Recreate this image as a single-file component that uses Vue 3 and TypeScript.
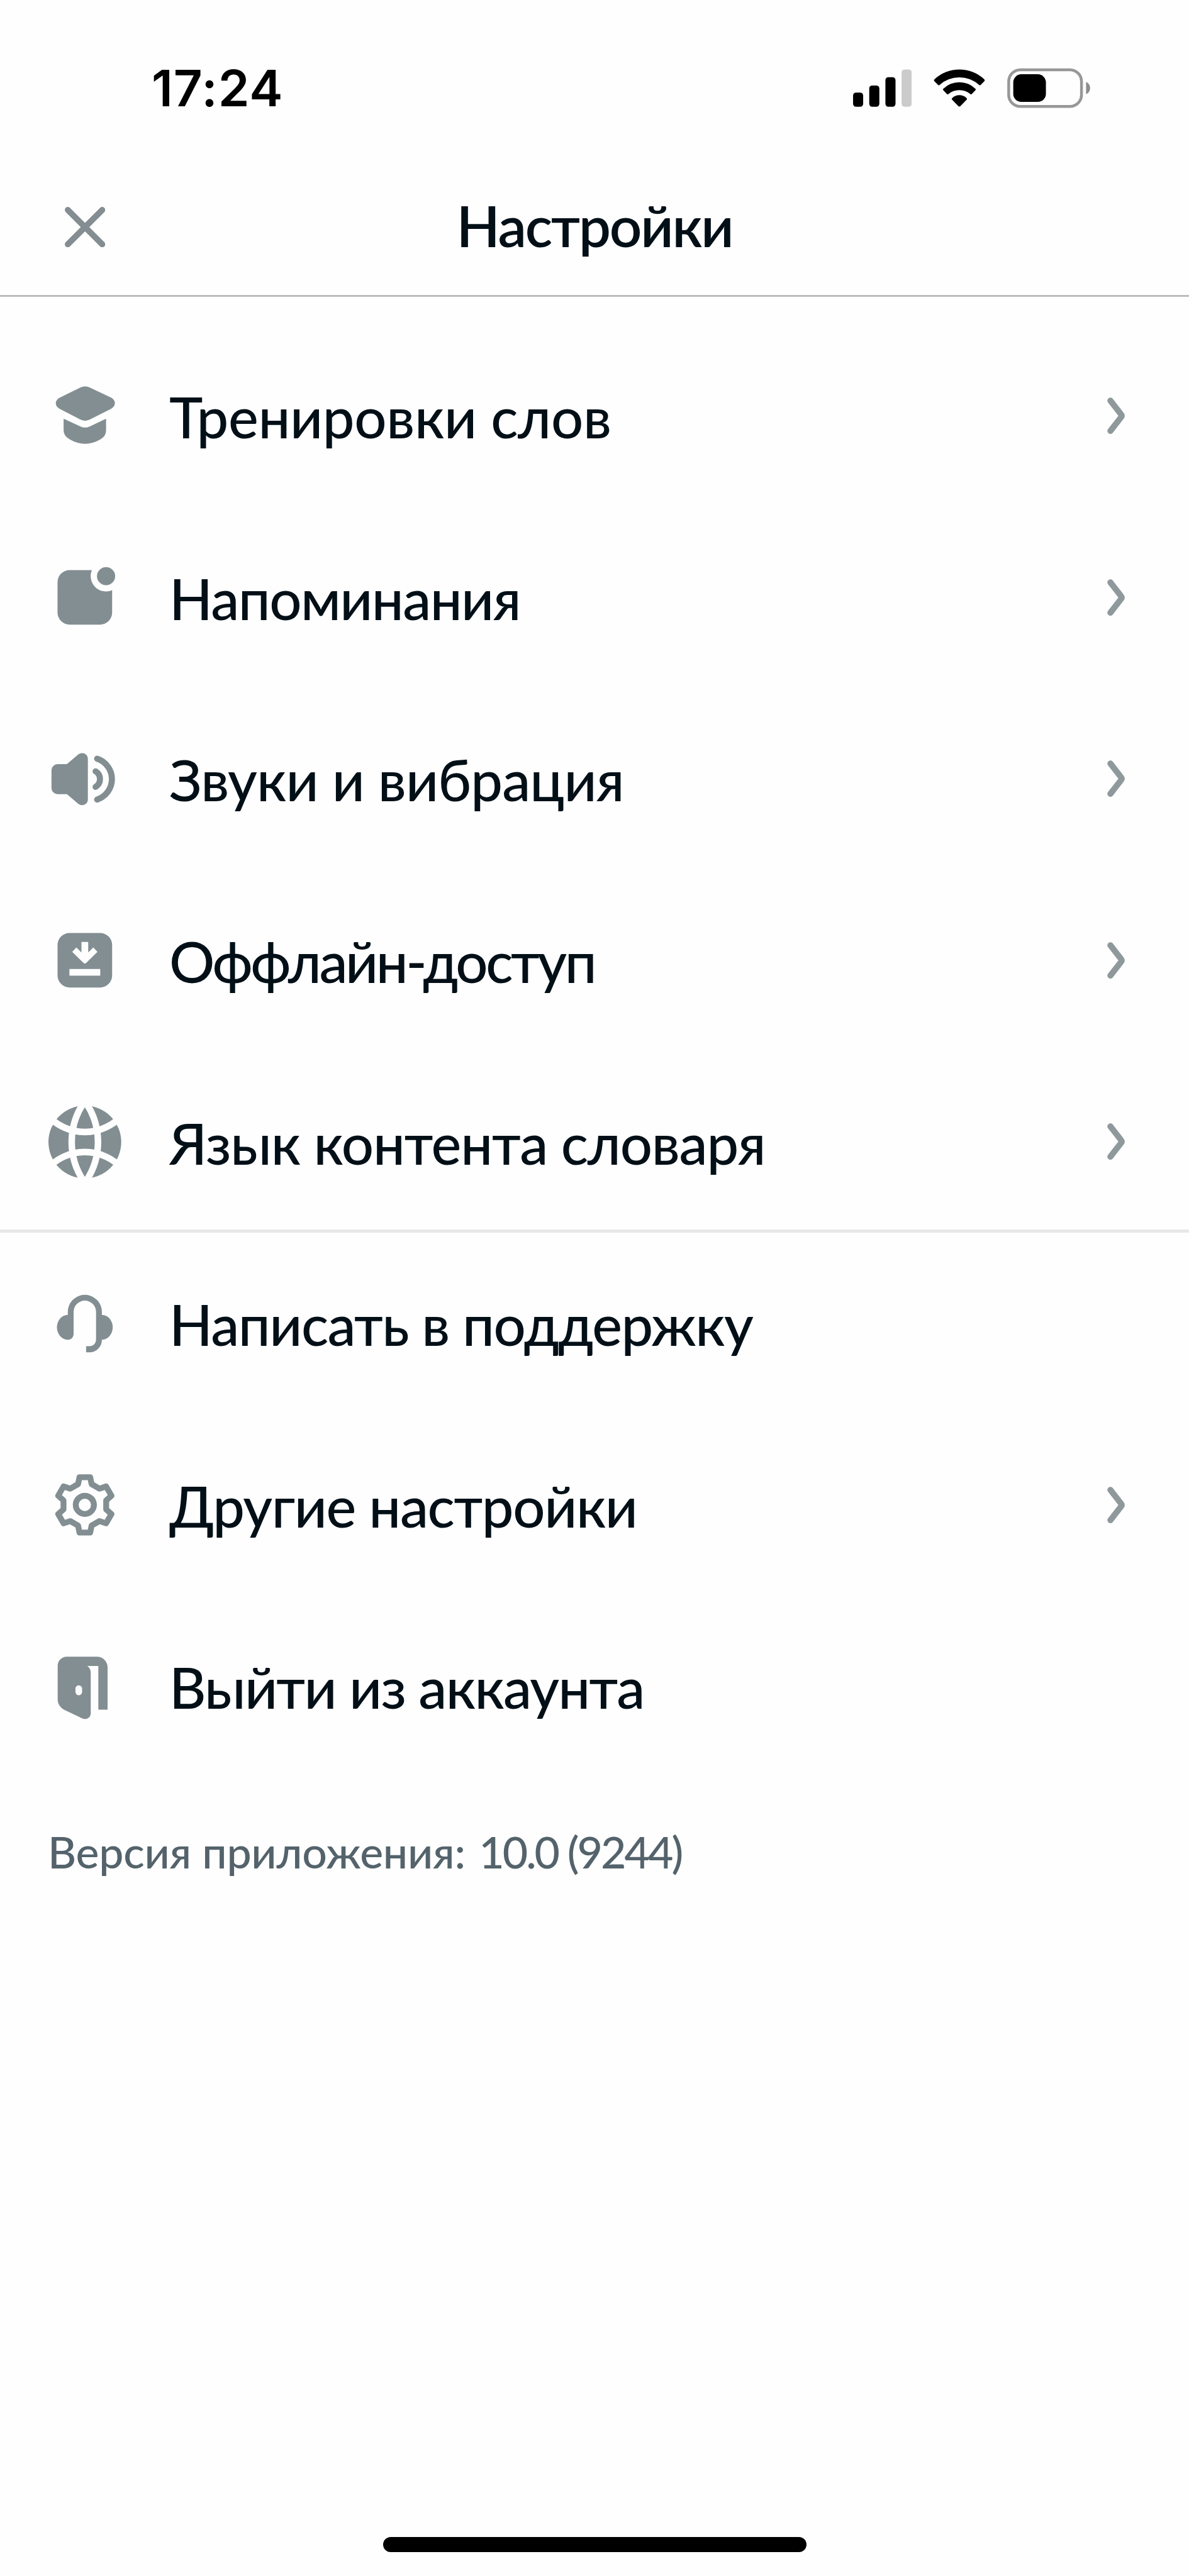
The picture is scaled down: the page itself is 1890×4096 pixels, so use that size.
<script setup lang="ts">
type IconName = 'cap' | 'badge' | 'sound' | 'download' | 'globe' | 'headset' | 'gear' | 'door'

interface SettingsItem {
  icon: IconName
  label: string
  tracking: number
  chevron: boolean
}

const groups: SettingsItem[][] = [
  [
    { icon: 'cap', label: 'Тренировки слов', tracking: -0.33, chevron: true },
    { icon: 'badge', label: 'Напоминания', tracking: -1.6, chevron: true },
    { icon: 'sound', label: 'Звуки и вибрация', tracking: -0.88, chevron: true },
    { icon: 'download', label: 'Оффлайн-доступ', tracking: -3.45, chevron: true },
    { icon: 'globe', label: 'Язык контента словаря', tracking: -1.2, chevron: true },
  ],
  [
    { icon: 'headset', label: 'Написать в поддержку', tracking: -1.55, chevron: false },
    { icon: 'gear', label: 'Другие настройки', tracking: -1.4, chevron: true },
    { icon: 'door', label: 'Выйти из аккаунта', tracking: -1.7, chevron: false },
  ],
]

// One tooth of the gear, repeated every 60 degrees
const tooth: [number, number][] = [
  [-13.4, -41],
  [-10.6, -54.7],
  [10.6, -54.7],
  [13.4, -41],
]
const gearPoints = [0, 1, 2, 3, 4, 5]
  .flatMap((step) => {
    const a = (step * Math.PI) / 3
    return tooth.map(([x, y]) => {
      const px = x * Math.cos(a) - y * Math.sin(a)
      const py = x * Math.sin(a) + y * Math.cos(a)
      return `${px.toFixed(2)},${py.toFixed(2)}`
    })
  })
  .join(' ')
</script>

<template>
  <main class="screen">
    <div class="status">
      <span class="time">17:24</span>
      <div class="indicators">
        <svg class="signal" viewBox="0 0 116 80">
          <rect x="0" y="48.7" width="20" height="28.3" rx="6" />
          <rect x="32" y="34.7" width="20" height="42.3" rx="6" />
          <rect x="64" y="18.3" width="20" height="58.7" rx="6" />
          <rect x="96" y="3" width="20" height="74" rx="6" fill="#cbcbcb" />
        </svg>
        <svg class="wifi" viewBox="0 0 102 80">
          <path d="M1.6 22.6A72 72 0 0 1 100.4 22.6Q102 24.3 100.6 26L93.2 33.6Q91.7 35 90 33.6A58.5 58.5 0 0 0 12 33.6Q10.3 35 8.8 33.6L1.4 26Q0 24.3 1.6 22.6Z" />
          <path d="M19.4 41A45.5 45.5 0 0 1 82.6 41Q84.2 42.6 82.8 44.2L75.6 51.6Q74.2 53 72.6 51.6A33.6 33.6 0 0 0 29.4 51.6Q27.8 53 26.4 51.6L19.2 44.2Q17.8 42.6 19.4 41Z" />
          <path d="M36.8 59.6A20.5 20.5 0 0 1 65.2 59.6Q66.8 61.3 65.4 63L53 75.6Q51 77.6 49 75.6L36.6 63Q35.2 61.3 36.8 59.6Z" />
        </svg>
        <svg class="battery" viewBox="0 0 165 80">
          <rect x="3" y="3.6" width="144" height="72.6" rx="23" fill="none" stroke="#979797" stroke-width="5.6" />
          <rect x="12" y="12.6" width="64.6" height="54.6" rx="16" />
          <path d="M156 27.6C161 29.6 164 34.4 164 39.8S161 50 156 52Z" fill="#8c8c8c" />
        </svg>
      </div>
    </div>

    <header class="header">
      <button class="close" aria-label="Закрыть">
        <svg viewBox="-40 -40 80 80">
          <path d="M-34 -34L34 34M34 -34L-34 34" />
        </svg>
      </button>
      <h1 class="title">Настройки</h1>
    </header>

    <nav class="list">
      <ul v-for="(group, g) in groups" :key="g" class="group">
        <li v-for="item in group" :key="item.icon" class="row">
          <svg class="icon" viewBox="-72 -72 144 144">
            <g v-if="item.icon === 'cap'">
              <path d="M-49.5 -35.5L-9 -55.4C-3 -58.6 4 -58.6 10 -55.4L52 -35.5C62 -30 62 -19 52 -13.5L10 7.8C4 10.8 -3 10.8 -9 7.8L-50 -13.5C-60 -19 -60 -30 -49.5 -35.5Z" />
              <path d="M-42 6L-9 21.3C-3 24.4 4 24.4 10 21.3L42 6V28C42 38 38 43 30 47.5C10 58.7 -9 58.7 -29 47.5C-37 43 -42 38 -42 28Z" />
            </g>
            <g v-else-if="item.icon === 'badge'">
              <path d="M14 -54H-30A24 24 0 0 0 -54 -30V30A24 24 0 0 0 -30 54H30A24 24 0 0 0 54 30V-14A30.5 30.5 0 0 1 14 -54Z" />
              <circle cx="42" cy="-42" r="18" />
            </g>
            <g v-else-if="item.icon === 'sound'">
              <path d="M-54 -29.6H-35.5L-14 -48C-6 -55 6 -51 6 -40V40C6 51 -6 55 -14 48L-35.5 29.6H-54A12 12 0 0 1 -66 17.6V-17.6A12 12 0 0 1 -54 -29.6Z" />
              <path class="wave" d="M24.3 -40.4A42.5 42.5 0 0 1 24.3 40.4" />
              <path class="wave" d="M21.3 -15.4A18 18 0 0 1 21.3 15.4" />
            </g>
            <g v-else-if="item.icon === 'download'">
              <rect x="-54" y="-54" width="108" height="108" rx="24" />
              <path class="cut" d="M-6.7 -36.3H6.7V-15.3L16.7 -25.3L25 -16.7L2.8 5.2Q0 7.8 -2.8 5.2L-25 -16.7L-16.7 -25.3L-6.7 -15.3Z" />
              <rect class="cut" x="-30.5" y="17.3" width="61" height="13.2" />
            </g>
            <g v-else-if="item.icon === 'globe'">
              <circle r="72" />
              <path
                class="grid-line"
                d="M-3.4 -76A139 139 0 0 0 -3.4 76M3.4 -76A139 139 0 0 1 3.4 76M-74 -53A99 99 0 0 0 74 -53M-74 53A99 99 0 0 1 74 53"
              />
            </g>
            <g v-else-if="item.icon === 'headset'">
              <path d="M-33.7 -16.4V-22.3A33.7 33.7 0 0 1 33.7 -22.3V-16.4A21.5 24.65 0 0 1 33.7 32.9C33.7 47 23 57.9 9 57.9H2.5V45.7H9C17 45.7 22.2 40 22.2 32V-22.3A22.2 22.2 0 0 0 -22.2 -22.3V21C-22.2 28 -27 32.9 -33.7 32.9A21.5 24.65 0 0 1 -33.7 -16.4Z" />
            </g>
            <g v-else-if="item.icon === 'gear'" class="outline">
              <polygon :points="gearPoints" />
              <circle r="18" />
            </g>
            <path
              v-else
              fill-rule="evenodd"
              d="M-36 -58H24A21 21 0 0 1 45 -37V47H26.7V-39.5H5C9 -36.5 11.7 -32 11.7 -26V54C11.7 62 4 67.5 -4 64.5L-40 47.5C-49 43 -53.7 35 -53.7 27V-40A18 18 0 0 1 -36 -58ZM-12 -1.5A6.6 6.6 0 0 0 -18.6 5.1V11.7A6.6 6.6 0 0 0 -5.4 11.7V5.1A6.6 6.6 0 0 0 -12 -1.5Z"
            />
          </svg>
          <span class="label" :style="{ letterSpacing: item.tracking + 'px' }">{{ item.label }}</span>
          <svg v-if="item.chevron" class="chevron" viewBox="0 -40 40 80">
            <path d="M6.3 -30L27.4 -2.8Q29.6 0 27.4 2.8L6.3 30" />
          </svg>
        </li>
      </ul>
    </nav>

    <p class="version">Версия приложения: <span class="build">10.0 (9244)</span></p>

    <div class="home-indicator"></div>
  </main>
</template>

<style>
body {
  margin: 0;
  background: #fefefe;
}
</style>

<style scoped>
.screen {
  --u: calc(1890px / 2352);
  box-sizing: border-box;
  display: flex;
  flex-direction: column;
  width: 1890px;
  height: 4096px;
  overflow: hidden;
  background: #fefefe;
  color: #020f17;
  font-family: Lato, "Noto Sans", sans-serif;
}

svg {
  display: block;
  flex: none;
}

.status {
  box-sizing: border-box;
  display: flex;
  align-items: center;
  justify-content: space-between;
  height: 244px;
  padding: 36px 156.5px 0 241px;
  color: #000;
}

.time {
  font-family: Inter, sans-serif;
  font-size: 80px;
  font-weight: 600;
  line-height: 100px;
  letter-spacing: 1px;
}

.indicators {
  display: flex;
  align-items: center;
}

.signal {
  width: calc(116 * var(--u));
  height: calc(80 * var(--u));
  margin-right: calc(43.5 * var(--u));
}

.wifi {
  width: calc(102 * var(--u));
  height: calc(80 * var(--u));
  margin-right: calc(43.5 * var(--u));
}

.battery {
  width: calc(165 * var(--u));
  height: calc(80 * var(--u));
}

.header {
  box-sizing: border-box;
  display: grid;
  grid-template-columns: 240px 1fr 240px;
  align-items: center;
  height: 227.5px;
  border-bottom: 3px solid #bcbcbc;
}

.close {
  justify-self: end;
  margin: 10px 73px 0 0;
  padding: 0;
  border: 0;
  background: none;
}

.close svg {
  width: calc(80 * var(--u));
  height: calc(80 * var(--u));
  fill: none;
  stroke: #838d92;
  stroke-width: 12;
  stroke-linecap: round;
}

.title {
  margin: 0;
  padding-top: 4px;
  font-size: 90.5px;
  font-weight: 600;
  line-height: 110px;
  letter-spacing: -2.2px;
  text-align: center;
}

.list {
  padding-top: 45.5px;
}

.group {
  margin: 0;
  padding: 0;
  list-style: none;
}

.group:first-child {
  box-shadow: inset 0 -5px 0 #e8e8e8;
}

.row {
  box-sizing: border-box;
  display: flex;
  align-items: center;
  height: 288.57px;
  padding: 0 98px 0 77px;
}

.icon {
  width: calc(144 * var(--u));
  height: calc(144 * var(--u));
  margin-right: 76.3px;
  overflow: visible;
  fill: #828e92;
}

.wave {
  fill: none;
  stroke: #828e92;
  stroke-width: 12;
  stroke-linecap: round;
}

.cut {
  fill: #fefefe;
}

.grid-line {
  fill: none;
  stroke: #fefefe;
  stroke-width: 13;
}

.outline {
  fill: none;
  stroke: #828e92;
  stroke-width: 11.6;
  stroke-linejoin: round;
}

.label {
  flex: 1;
  padding-top: 2px;
  font-size: 90.3px;
  font-weight: 500;
  line-height: 110px;
  white-space: nowrap;
}

.chevron {
  width: calc(40 * var(--u));
  height: calc(80 * var(--u));
  fill: none;
  stroke: #8f999c;
  stroke-width: 12;
  stroke-linecap: round;
}

.version {
  margin: 0;
  padding: 76px 0 0 76px;
  color: #54636b;
  font-size: 69.8px;
  font-weight: 500;
  line-height: 84px;
  letter-spacing: -0.25px;
}

.build {
  margin-left: 4px;
  letter-spacing: -3px;
}

.home-indicator {
  width: 673px;
  height: 24.4px;
  margin: auto auto 38px;
  border-radius: 12.2px;
  background: #000;
}
</style>
